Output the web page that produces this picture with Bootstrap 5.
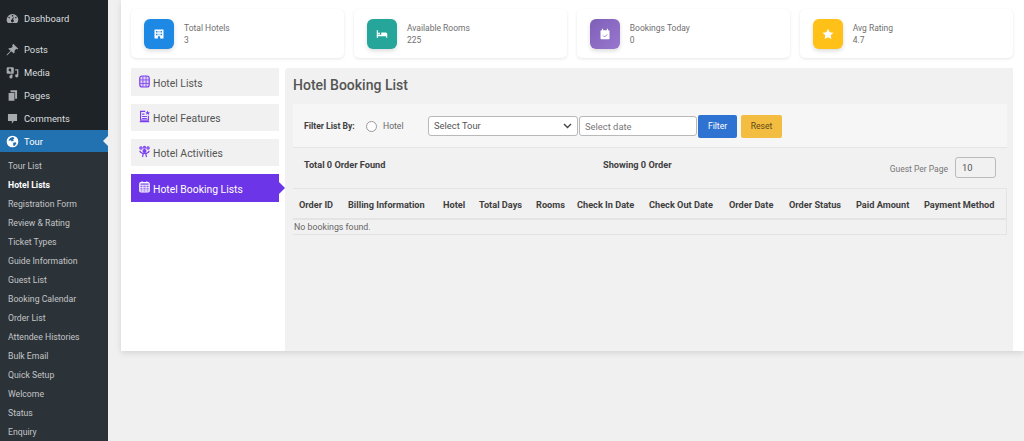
<!DOCTYPE html>
<html lang="en"><head><meta charset="utf-8"><title>Hotel Booking Lists</title>
<link href="https://cdn.jsdelivr.net/npm/bootstrap@5.3.0/dist/css/bootstrap.min.css" rel="stylesheet">
<style>
html,body{height:441px;overflow:hidden}
body{background:#f0f0f1;font-family:Roboto,"Open Sans",sans-serif;color:#555}
.wp-side{width:108px;background:#1d2327;height:441px;flex:none;padding-top:7px}
.wp-item{height:23px;color:#dcdedf;font-size:9.4px;padding-left:6px;gap:5px;line-height:23px}
.wp-item svg{width:13px;height:13px;flex:none;fill:#a7aaad}
.wp-dash{margin-bottom:8px}
.wp-active{background:#2271b1;color:#fff;position:relative;height:22px}
.wp-active svg{fill:#fff}
.wp-active::after{content:"";position:absolute;right:0;top:6px;border:5px solid transparent;border-right-color:#f0f0f1;border-left:0}
.wp-sub{background:#2c3338;padding-top:5px;flex:1}
.wp-sub a{display:block;height:19px;line-height:19px;font-size:8.7px;color:#c3c4c7;padding-left:8px;text-decoration:none;white-space:nowrap}
.wp-sub a.on{color:#fff;font-weight:700}
.page-wrap{margin-left:13px;height:351px;width:903px;background:#fff;box-shadow:0 2px 6px rgba(0,0,0,.12);overflow:hidden}
.stat-row{padding:9px 11px 0 10px;gap:9.5px;height:59px;margin-bottom:0}
.stat-card{flex:1;height:49px;background:#fff;border-radius:5px;box-shadow:0 1px 3px rgba(0,0,0,.1);padding:0 13px;gap:10px}
.stat-ico{width:30px;height:30px;border-radius:6px;box-shadow:0 2px 4px rgba(0,0,0,.14)}
.stat-ico svg{width:12px;height:12px;fill:#fff}
.ico-blue{background:#1e88e5}.ico-teal{background:#26a69a}.ico-purple{background:linear-gradient(135deg,#7e5fb8,#9a77cf)}.ico-amber{background:#ffc017}
.stat-txt{font-size:8.5px;line-height:12.5px;color:#6f6f6f;padding-top:1px}
.stat-txt span{display:block}
.body-row{margin-top:9.3px}
.tab-col{width:164px;padding-left:10px;flex:none}
.tab-link{height:27.5px;width:148px;background:#f1f1f1;margin-bottom:7.8px;font-size:10.4px;color:#555;gap:3px;padding:4px 0 0 8px;position:relative;white-space:nowrap;line-height:1}
.tab-link svg{width:11px;height:13px;fill:rgba(123,63,242,.16);stroke:#7b3ff2;stroke-width:1.5;flex:none;margin-top:-6px}
.tab-link.on{background:#6d35e8;color:#fff}
.tab-link.on svg{stroke:#fff;fill:rgba(255,255,255,.25)}
.tab-link.on::after{content:"";position:absolute;left:100%;top:8px;border:6px solid transparent;border-left-color:#6d35e8;border-right:0}
.main-box{flex:1;background:#f1f1f1;height:283px;padding:0 6px 0 8px;margin-right:11px;border-top-left-radius:4px}
.main-title{font-size:14px;font-weight:500;line-height:20px;margin:0;padding-top:7px;height:36px;color:#555}
.filter-bar{height:43.5px;background:#f6f6f6;border-bottom:1px solid #e6e6e6;padding:1px 0 0 11px;font-size:8.6px}
.filter-lab{font-weight:700;color:#3f3f3f;margin:0;width:62px;white-space:nowrap}
.radio-dot{width:11px;height:11px;border:1px solid #999;border-radius:50%;background:#fff;margin-right:6px}
.hotel-lab{color:#666;width:45px}
.sel-tour{width:150px;height:20px;font-size:9.4px;padding:0 5px;border:1px solid #b9b9b9;border-radius:3px;background:#fff;color:#555}
.date-in{width:118px;height:20px;font-size:9.4px;padding:0 5px;border:1px solid #b9b9b9;border-radius:3px;background:#fff;margin-left:1px;color:#777}
.date-in::placeholder{color:#777;opacity:1}
.act-btn{width:39px;height:23px;font-size:8.6px;padding:0;border-radius:2px;border:0;margin-left:1px}
.act-blue{background:#2f73d2;color:#fff}
.act-gold{background:#f3bd41;color:#5d4a17;margin-left:4px;width:41px}
.count-row{height:41px;border-bottom:1px solid #e4e4e4;font-size:9.2px;padding:10px 11px 0 11px}
.count-row b{color:#3f3f3f;font-weight:700}
.count-a{width:299px}.count-b{flex:1}
.per-lab{color:#777;font-size:8.5px;margin:5px 7px 0 0}
.per-box{width:41px;height:21px;border:1px solid #bbb;border-radius:3px;font-size:9.4px;padding-left:6px;line-height:19px;margin-top:-1px;color:#555}
.tbl-book{width:714px;margin:0;font-size:9.2px;border-collapse:collapse;table-layout:fixed;border-right:1px solid #e4e4e4}
.tbl-book th{font-weight:700;color:#3f3f3f;height:30px;padding:3px 0 0;border-bottom:2px solid #e4e4e4;white-space:nowrap;vertical-align:middle}
.tbl-book th:nth-child(1){width:55px;padding-left:6px}
.tbl-book th:nth-child(2){width:95px}
.tbl-book th:nth-child(3){width:36px}
.tbl-book th:nth-child(4){width:57px}
.tbl-book th:nth-child(5){width:41px}
.tbl-book th:nth-child(6){width:72px}
.tbl-book th:nth-child(7){width:80px}
.tbl-book th:nth-child(8){width:60px}
.tbl-book th:nth-child(9){width:67px}
.tbl-book th:nth-child(10){width:68px}
.tbl-book td{height:15px;padding:0 0 0 1px;border-bottom:1px solid #e4e4e4;font-size:8.8px;color:#666;line-height:14px}
</style></head>
<body>
<div class="d-flex">
<nav class="wp-side d-flex flex-column">
  <div class="wp-item wp-dash d-flex align-items-center"><svg viewBox="0 0 20 20"><path d="M10 3a9 9 0 0 0-9 9c0 2 .7 3.800 2 5h14a9 9 0 0 0 2-5 9 9 0 0 0-9-9zM9 4.500h2v2.500H9zM4.500 7l1.700 1.700-1.200 1.200L3.500 8.300zM15.500 7l1 1.300-1.500 1.600-1.200-1.200zM10 16a2.300 2.300 0 0 1-1.200-4.300L12 7l-.9 4.800A2.300 2.300 0 0 1 10 16z"/></svg>Dashboard</div>
  <div class="wp-item d-flex align-items-center"><svg viewBox="0 0 20 20"><path d="M11 1l8 8-2 1-1-1-3 3c.5 1.500.3 3-.7 4L8 12.700 2 19l-1 0 0-1 6-6L3.500 8.700c1-1 2.500-1.200 4-.7l3-3-1-1z"/></svg>Posts</div>
  <div class="wp-item d-flex align-items-center"><svg viewBox="0 0 20 20"><path d="M2 2h9l1 1v8l-1 1H2l-1-1V3zm4 2a2 2 0 1 0 0 4c1 0 1 .5 1 1.500V10h1V6a2 2 0 0 0-2-2zM14 5h5v10a2.500 2.500 0 1 1-2-2.400V7h-3zM7 13h3v3a2.500 2.500 0 1 1-3-1.800z"/></svg>Media</div>
  <div class="wp-item d-flex align-items-center"><svg viewBox="0 0 20 20"><path d="M7 2h10v13h-3V5H7zM4 6h9v12H4z"/></svg>Pages</div>
  <div class="wp-item d-flex align-items-center"><svg viewBox="0 0 20 20"><path d="M3 3h14v11h-5l-3 4v-4H3z"/></svg>Comments</div>
  <div class="wp-item wp-active d-flex align-items-center"><svg viewBox="0 0 20 20"><path d="M10 1a9 9 0 1 0 0 18 9 9 0 0 0 0-18zM8 4l3-1 2 2-2 2 1 2-3 1-2-2-3 1c0-2 2-4 4-5zm3 8l4-1 1 2-3 4-2-1z"/></svg>Tour</div>
  <div class="wp-sub">
    <a href="#">Tour List</a><a href="#" class="on">Hotel Lists</a><a href="#">Registration Form</a><a href="#">Review &amp; Rating</a><a href="#">Ticket Types</a><a href="#">Guide Information</a><a href="#">Guest List</a><a href="#">Booking Calendar</a><a href="#">Order List</a><a href="#">Attendee Histories</a><a href="#">Bulk Email</a><a href="#">Quick Setup</a><a href="#">Welcome</a><a href="#">Status</a><a href="#">Enquiry</a>
  </div>
</nav>
<div class="page-wrap">
  <div class="stat-row d-flex">
    <div class="stat-card d-flex align-items-center"><div class="stat-ico ico-blue d-flex align-items-center justify-content-center"><svg viewBox="0 0 16 16"><path d="M2 2h12v12H9.500v-3h-3v3H2zm2 2v2h2V4zm3.500 0v2h1V4zM10 4v2h2V4zM4 7.500v2h2v-2zm3.500 0v2h1v-2zm2.500 0v2h2v-2z"/></svg></div><div class="stat-txt"><span>Total Hotels</span><span>3</span></div></div>
    <div class="stat-card d-flex align-items-center"><div class="stat-ico ico-teal d-flex align-items-center justify-content-center"><svg viewBox="0 0 16 16"><path d="M1 3h1.500v6H7V6h6a2 2 0 0 1 2 2v5h-1.500v-2h-11v2H1zm3 3a1.300 1.300 0 1 0 0 2.600A1.300 1.300 0 0 0 4 6z"/></svg></div><div class="stat-txt"><span>Available Rooms</span><span>225</span></div></div>
    <div class="stat-card d-flex align-items-center"><div class="stat-ico ico-purple d-flex align-items-center justify-content-center"><svg viewBox="0 0 16 16"><path d="M4 1h1.500v2h5V1H12v2h1a1 1 0 0 1 1 1v10a1 1 0 0 1-1 1H3a1 1 0 0 1-1-1V4a1 1 0 0 1 1-1h1z"/><path d="M5.500 10l2 2 3.500-3.500" stroke="#9a77cf" stroke-width="1.200" fill="none"/></svg></div><div class="stat-txt"><span>Bookings Today</span><span>0</span></div></div>
    <div class="stat-card d-flex align-items-center"><div class="stat-ico ico-amber d-flex align-items-center justify-content-center"><svg viewBox="0 0 16 16"><path d="M8 1l2.200 4.600 5 .7-3.600 3.500.9 5L8 12.400l-4.500 2.400.9-5L.8 6.300l5-.7z"/></svg></div><div class="stat-txt"><span>Avg Rating</span><span>4.7</span></div></div>
  </div>
  <div class="d-flex body-row">
    <div class="tab-col">
      <div class="tab-link d-flex align-items-center"><svg viewBox="0 0 14 16"><rect x="1" y="1" width="12" height="14" rx="3"/><path d="M5 1v14M9 1v14M1 6h12M1 10.500h12" stroke-width="1"/></svg>Hotel Lists</div>
      <div class="tab-link d-flex align-items-center"><svg viewBox="0 0 14 16"><path d="M8 1.500H2v11h10V7M1 14.500h12M4 5h3M4 8h6M4 10.500h6" fill="none"/><path d="M11 .5l1 2 2 .3-1.500 1.400.4 2L11 4.800l-1.900 1 .4-2L8 2.800l2-.3z" fill="#7b3ff2" stroke="none"/></svg>Hotel Features</div>
      <div class="tab-link d-flex align-items-center"><svg viewBox="0 0 14 16"><circle cx="2.500" cy="3.500" r="1.500"/><circle cx="11.500" cy="3.500" r="1.500"/><circle cx="7" cy="2.500" r="1.200"/><circle cx="7" cy="7.500" r="1.800" fill="#7b3ff2"/><path d="M1 7c1 3 3 3.500 6 3.500s5-.5 6-3.500M4.500 15l1-4.500M9.500 15l-1-4.500" fill="none"/></svg>Hotel Activities</div>
      <div class="tab-link on d-flex align-items-center"><svg viewBox="0 0 14 16"><rect x="1" y="3" width="12" height="12" rx="1.500"/><path d="M4 1v3M10 1v3M1 6.500h12M1 9.500h12M1 12.500h12M5 6.500V15M9 6.500V15" stroke-width="1"/></svg>Hotel Booking Lists</div>
    </div>
    <div class="main-box">
      <h1 class="main-title">Hotel Booking List</h1>
      <div class="filter-bar d-flex align-items-center">
        <label class="filter-lab">Filter List By:</label><span class="radio-dot"></span><span class="hotel-lab">Hotel</span>
        <div class="sel-tour d-flex align-items-center justify-content-between"><span>Select Tour</span><svg width="9" height="6" viewBox="0 0 9 6"><path d="M1 1l3.500 3.500L8 1" fill="none" stroke="#444" stroke-width="1.400"/></svg></div>
        <input class="date-in" placeholder="Select date">
        <button class="act-btn act-blue">Filter</button><button class="act-btn act-gold">Reset</button>
      </div>
      <div class="count-row d-flex">
        <b class="count-a">Total 0 Order Found</b><b class="count-b">Showing 0 Order</b>
        <span class="per-lab">Guest Per Page</span><div class="per-box">10</div>
      </div>
      <table class="tbl-book">
        <thead><tr>
          <th>Order ID</th><th>Billing Information</th><th>Hotel</th><th>Total Days</th><th>Rooms</th><th>Check In Date</th><th>Check Out Date</th><th>Order Date</th><th>Order Status</th><th>Paid Amount</th><th>Payment Method</th>
        </tr></thead>
        <tbody><tr><td colspan="11">No bookings found.</td></tr></tbody>
      </table>
    </div>
  </div>
</div>
</div>
<script src="https://cdn.jsdelivr.net/npm/bootstrap@5.3.0/dist/js/bootstrap.bundle.min.js"></script>
</body></html>
